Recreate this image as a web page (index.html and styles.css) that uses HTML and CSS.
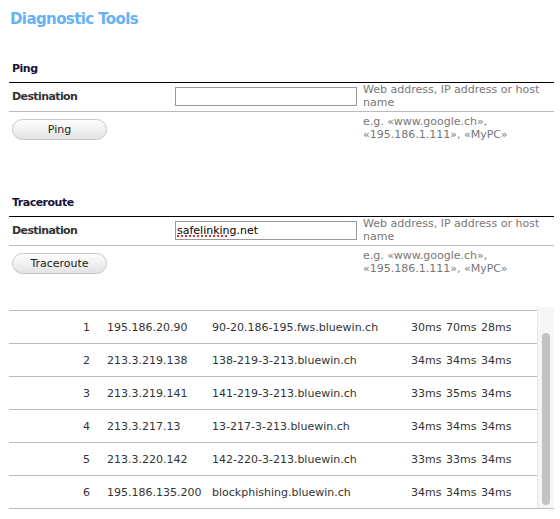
FILE: index.html
```html
<!DOCTYPE html>
<html lang="en">
<head>
  <meta charset="UTF-8">
  <title>Diagnostic Tools</title>
  <link rel="stylesheet" href="styles.css">
</head>
<body>
  <main class="page">
    <h1>Diagnostic Tools</h1>

    <section class="tool">
      <h2>Ping</h2>
      <div class="row">
        <label>Destination</label>
        <div class="field"></div>
        <p class="help">Web address, IP address or host name</p>
      </div>
      <div class="row actions">
        <button>Ping</button>
        <p class="help">e.g. «www.google.ch», «195.186.1.111», «MyPC»</p>
      </div>
    </section>

    <section class="tool">
      <h2>Traceroute</h2>
      <div class="row">
        <label>Destination</label>
        <div class="field"><span class="typo">safelinking</span>.net</div>
        <p class="help">Web address, IP address or host name</p>
      </div>
      <div class="row actions">
        <button>Traceroute</button>
        <p class="help">e.g. «www.google.ch», «195.186.1.111», «MyPC»</p>
      </div>
    </section>

    <div class="output">
      <div class="hops">
        <div class="hop"><span>1</span><span>195.186.20.90</span><span>90-20.186-195.fws.bluewin.ch</span><span>30ms</span><span>70ms</span><span>28ms</span></div>
        <div class="hop"><span>2</span><span>213.3.219.138</span><span>138-219-3-213.bluewin.ch</span><span>34ms</span><span>34ms</span><span>34ms</span></div>
        <div class="hop"><span>3</span><span>213.3.219.141</span><span>141-219-3-213.bluewin.ch</span><span>33ms</span><span>35ms</span><span>34ms</span></div>
        <div class="hop"><span>4</span><span>213.3.217.13</span><span>13-217-3-213.bluewin.ch</span><span>34ms</span><span>34ms</span><span>34ms</span></div>
        <div class="hop"><span>5</span><span>213.3.220.142</span><span>142-220-3-213.bluewin.ch</span><span>33ms</span><span>33ms</span><span>34ms</span></div>
        <div class="hop"><span>6</span><span>195.186.135.200</span><span>blockphishing.bluewin.ch</span><span>34ms</span><span>34ms</span><span>34ms</span></div>
      </div>
      <div class="scrollbar"><div class="thumb"></div></div>
    </div>
  </main>
</body>
</html>
```

FILE: styles.css
```css
* { box-sizing: border-box; }

body {
  margin: 0;
  background: #fff;
  color: #333;
  font-family: "DejaVu Sans", Verdana, sans-serif;
  font-size: 11px;
  line-height: 13px;
}

.page {
  padding: 0 6px 0 9px;
}

h1 {
  margin: 0;
  padding: 9px 0 0 1px;
  font-size: 15px;
  line-height: 20px;
  letter-spacing: -0.6px;
  color: #66b2f6;
}

/* Tool sections */

.tool {
  margin-top: 32px;
}

.tool + .tool {
  margin-top: 54px;
}

h2 {
  margin: 0;
  padding: 1px 0 6px 3px;
  font-size: 11px;
  line-height: 14px;
  letter-spacing: -0.5px;
  color: #14143a;
  border-bottom: 1px solid #000;
}

.row {
  display: grid;
  grid-template-columns: 166px 188px 1fr;
  align-items: center;
  padding-bottom: 2px;
  border-bottom: 1px solid #bbb;
}

.row label {
  padding-left: 3px;
  font-weight: bold;
  letter-spacing: -0.6px;
  color: #333;
}

.field {
  width: 182px;
  height: 19px;
  border: 1px solid #999;
  padding: 2px 0 0 1px;
  color: #000;
  font-size: 11px;
  line-height: 13px;
}

.typo {
  text-decoration-line: underline;
  text-decoration-style: dotted;
  text-decoration-color: #e03030;
  text-decoration-thickness: 2px;
  text-underline-offset: 2px;
}

.help {
  margin: 0;
  color: #777;
}

.actions {
  align-items: start;
  padding: 3px 0 0;
  border-bottom: 0;
}

.actions button {
  grid-column: 1 / span 2;
  justify-self: start;
  margin: 4px 0 0 3px;
  width: 95px;
  height: 21px;
  padding: 0;
  border: 1px solid #c6c6c6;
  border-radius: 11px;
  background: linear-gradient(#fefefe, #f1f1f1 50%, #e2e2e2);
  color: #222;
  font: inherit;
}

/* Traceroute output */

.output {
  display: flex;
  margin-top: 32px;
  border-bottom: 1px solid #bbb;
}

.hops {
  flex: 1;
  padding-top: 3px;
}

.hop {
  display: grid;
  grid-template-columns: 81px 122px 199px 35px 35px 1fr;
  height: 33px;
  align-items: center;
  border-top: 1px solid #bbb;
  color: #333;
}

.hop span:first-child {
  text-align: right;
}

.hop span:nth-child(2) {
  padding-left: 17px;
}

.scrollbar {
  width: 17px;
  padding: 26px 4px 3px 4px;
  background: #f6f6f6;
  border-left: 1px solid #e8e8e8;
}

.thumb {
  height: 100%;
  background: #c2c2c2;
  border-radius: 4px;
}
```
